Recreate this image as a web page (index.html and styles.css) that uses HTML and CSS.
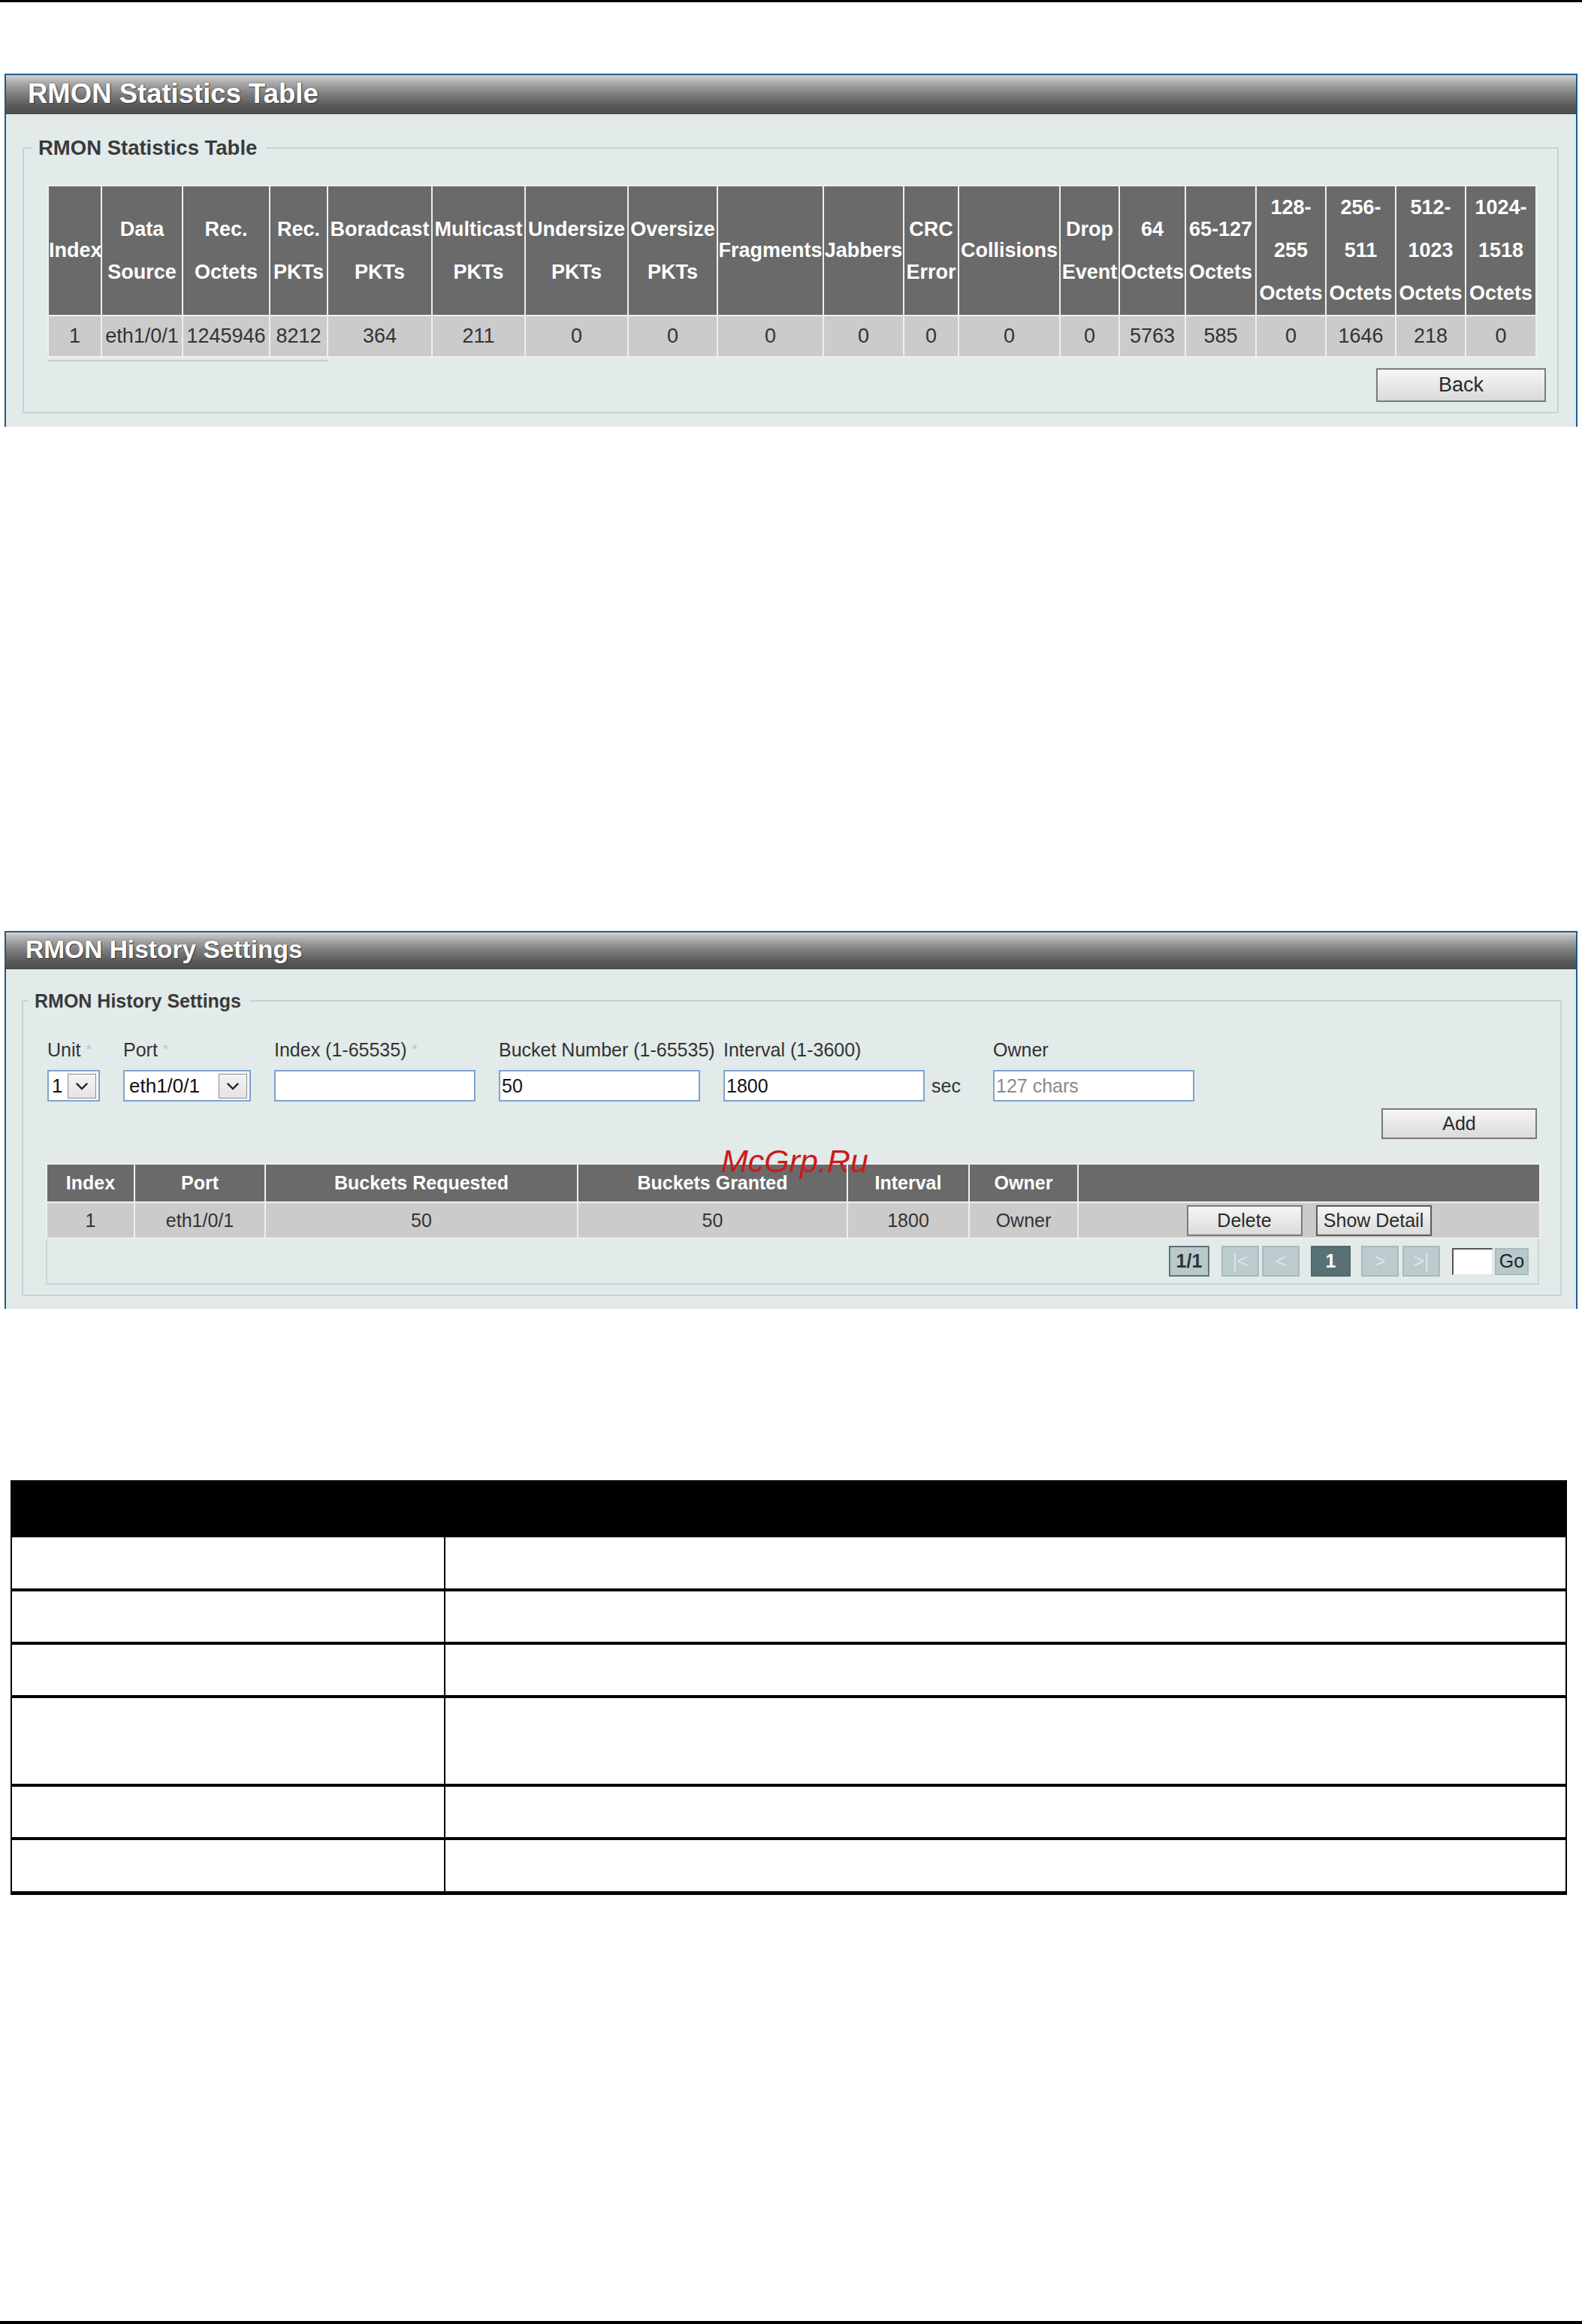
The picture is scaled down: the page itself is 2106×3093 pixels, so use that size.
FILE: index.html
```html
<!DOCTYPE html>
<html>
<head>
<meta charset="utf-8">
<title>RMON</title>
<link rel="stylesheet" href="styles.css">
</head>
<body>
<div class="page">
  <div class="topline"></div>

  <section class="panel panel-stats">
    <div class="panel-head panel-head-1">RMON Statistics Table</div>
    <div class="panel-body pb-1">
      <fieldset class="fs fs-1">
        <legend class="lg lg-1">RMON Statistics Table</legend>
        <div class="fs-body fsb-1">
          <table class="grid stats">
            <colgroup>
              <col style="width:71px"><col style="width:108px"><col style="width:116px"><col style="width:77px">
              <col style="width:139px"><col style="width:124px"><col style="width:137px"><col style="width:119px">
              <col style="width:141px"><col style="width:107px"><col style="width:73px"><col style="width:135px">
              <col style="width:79px"><col style="width:88px"><col style="width:94px"><col style="width:93px">
              <col style="width:93px"><col style="width:93px"><col style="width:94px">
            </colgroup>
            <thead>
              <tr>
                <th>Index</th><th>Data<br>Source</th><th>Rec.<br>Octets</th><th>Rec.<br>PKTs</th>
                <th>Boradcast<br>PKTs</th><th>Multicast<br>PKTs</th><th>Undersize<br>PKTs</th><th>Oversize<br>PKTs</th>
                <th>Fragments</th><th>Jabbers</th><th>CRC<br>Error</th><th>Collisions</th>
                <th>Drop<br>Event</th><th>64<br>Octets</th><th>65-127<br>Octets</th><th>128-<br>255<br>Octets</th>
                <th>256-<br>511<br>Octets</th><th>512-<br>1023<br>Octets</th><th>1024-<br>1518<br>Octets</th>
              </tr>
            </thead>
            <tbody>
              <tr>
                <td>1</td><td>eth1/0/1</td><td>1245946</td><td>8212</td><td>364</td><td>211</td><td>0</td><td>0</td>
                <td>0</td><td>0</td><td>0</td><td>0</td><td>0</td><td>5763</td><td>585</td><td>0</td><td>1646</td><td>218</td><td>0</td>
              </tr>
            </tbody>
          </table>
          <div class="under-line"></div>
          <div class="btn-row">
            <button class="btn btn-back">Back</button>
          </div>
        </div>
      </fieldset>
    </div>
  </section>

  <section class="panel panel-hist">
    <div class="panel-head panel-head-2">RMON History Settings</div>
    <div class="panel-body pb-2">
      <fieldset class="fs fs-2">
        <legend class="lg lg-2">RMON History Settings</legend>
        <div class="fs-body fsb-2">
          <div class="form-row">
            <div class="field f-unit">
              <div class="lbl">Unit <span class="req">*</span></div>
              <div class="select sel-unit"><span class="sel-val">1</span><span class="sel-arrow"><svg viewBox="0 0 20 12" width="18" height="11"><path d="M2 2 L10 10 L18 2" fill="none" stroke="#222" stroke-width="2.6"/></svg></span></div>
            </div>
            <div class="field f-port">
              <div class="lbl">Port <span class="req">*</span></div>
              <div class="select sel-port"><span class="sel-val">eth1/0/1</span><span class="sel-arrow"><svg viewBox="0 0 20 12" width="18" height="11"><path d="M2 2 L10 10 L18 2" fill="none" stroke="#222" stroke-width="2.6"/></svg></span></div>
            </div>
            <div class="field f-txt">
              <div class="lbl">Index (1-65535) <span class="req">*</span></div>
              <input class="txt" type="text" value="">
            </div>
            <div class="field f-txt">
              <div class="lbl">Bucket Number (1-65535)</div>
              <input class="txt" type="text" value="50">
            </div>
            <div class="field f-int">
              <div class="lbl">Interval (1-3600)</div>
              <div class="ctl-line"><input class="txt" type="text" value="1800"><span class="unit">sec</span></div>
            </div>
            <div class="field f-txt">
              <div class="lbl">Owner</div>
              <input class="txt" type="text" placeholder="127 chars">
            </div>
          </div>
          <div class="btn-row">
            <button class="btn btn-add">Add</button>
          </div>
          <table class="grid hist">
            <colgroup>
              <col style="width:117px"><col style="width:174px"><col style="width:416px"><col style="width:359px">
              <col style="width:162px"><col style="width:145px"><col style="width:615px">
            </colgroup>
            <thead>
              <tr><th>Index</th><th>Port</th><th>Buckets Requested</th><th>Buckets Granted</th><th>Interval</th><th>Owner</th><th></th></tr>
            </thead>
            <tbody>
              <tr>
                <td>1</td><td>eth1/0/1</td><td>50</td><td>50</td><td>1800</td><td>Owner</td>
                <td><div class="acts"><button class="btn btn-sm">Delete</button><button class="btn btn-sm btn-dark">Show Detail</button></div></td>
              </tr>
            </tbody>
          </table>
          <div class="pager">
            <span class="pg pg-count">1/1</span>
            <span class="pg pg-dis pg-first">|&lt;</span>
            <span class="pg pg-dis pg-prev">&lt;</span>
            <span class="pg pg-cur">1</span>
            <span class="pg pg-dis pg-next">&gt;</span>
            <span class="pg pg-dis pg-last">&gt;|</span>
            <span class="pg-input"></span>
            <span class="pg pg-go">Go</span>
          </div>
        </div>
      </fieldset>
    </div>
  </section>

  <table class="doc">
    <colgroup><col style="width:577px"><col></colgroup>
    <thead><tr class="dh"><th></th><th></th></tr></thead>
    <tbody>
      <tr class="r72"><td></td><td></td></tr>
      <tr class="r72"><td></td><td></td></tr>
      <tr class="r72"><td></td><td></td></tr>
      <tr class="r119"><td></td><td></td></tr>
      <tr class="r72"><td></td><td></td></tr>
      <tr class="r73 last"><td></td><td></td></tr>
    </tbody>
  </table>

  <div class="watermark">McGrp.Ru</div>
  <div class="bottomline"></div>
</div>
</body>
</html>
```

FILE: styles.css
```css
* { box-sizing: border-box; }
html, body { margin: 0; padding: 0; background: #fff; }
body { font-family: "Liberation Sans", Arial, sans-serif; color: #333; }

.page {
  position: relative;
  min-height: 3093px;
  display: flex;
  flex-direction: column;
}

.topline { height: 3px; background: #000; width: 100%; flex: none; }
.bottomline { margin-top: auto; height: 4px; background: #000; width: 100%; flex: none; }

.panel {
  margin-left: 6px;
  width: 2094px;
  border: 2px solid #1f5c8e;
  border-bottom: none;
  background: #e2eaea;
  flex: none;
}
.panel-stats { margin-top: 95px; }
.panel-hist { margin-top: 671px; }

.panel-head {
  color: #fff;
  font-weight: bold;
  background: linear-gradient(#d2d2d2 0%, #a6a6a6 22%, #7c7c7c 50%, #5a5a5a 78%, #4c4c4c 100%);
  text-shadow: 1px 1px 1px #3a3a3a, 0 0 2px #555;
  white-space: nowrap;
}
.panel-head-1 { height: 52px; font-size: 36.5px; line-height: 49px; padding-left: 29px; }
.panel-head-2 { height: 49px; font-size: 33.5px; line-height: 46px; padding-left: 26px; }

.pb-1 { padding-top: 29px; }
.pb-2 { padding-top: 27px; }

.fs {
  border: 2px solid #c7d3d3;
  padding: 0;
  min-width: 0;
}
.fs-1 { margin: 0 23px 18px 22px; }
.fs-2 { margin: 0 19px 17px 21px; }

.lg { font-weight: bold; color: #3a3a3a; white-space: nowrap; }
.lg-1 { font-size: 27.5px; line-height: 32px; margin-left: 10px; padding: 0 12px 0 9px; }
.lg-2 { font-size: 25px; line-height: 30px; margin-left: 6px; padding: 0 12px 0 9px; }

.fsb-1 { padding: 33px 15px 13px 31px; }
.fsb-2 { padding: 35px 28px 13px 30px; }

/* data tables */
.grid {
  border-collapse: collapse;
  table-layout: fixed;
}
.grid th, .grid td {
  border: 2px solid #eef0f0;
  padding: 0;
  text-align: center;
  vertical-align: middle;
  white-space: nowrap;
  overflow: visible;
}
.grid th { background: #6a6a6a; color: #fff; font-weight: bold; }
.grid td { background: #cbcbcb; color: #333; }

.stats { width: 1978px; }
.stats th { font-size: 27px; line-height: 57px; height: 172px; }
.stats td { font-size: 27px; height: 55px; }

.under-line { width: 373px; height: 2px; background: #c3cbcb; margin-top: 3px; }

.btn-row { display: flex; justify-content: flex-end; }

.btn {
  font-family: "Liberation Sans", Arial, sans-serif;
  color: #2a2a2a;
  background: linear-gradient(#f6f6f6, #dadada);
  border: 2px solid #7a7a7a;
  padding: 0;
  cursor: pointer;
}
.btn-back { width: 226px; height: 45px; font-size: 27px; margin-top: 9px; margin-right: 0; }
.btn-add { width: 207px; height: 41px; font-size: 25px; margin-top: 9px; margin-right: 3px; }

/* form */
.form-row { display: flex; gap: 31px; margin-left: 2px; }
.field { display: flex; flex-direction: column; flex: none; }
.f-unit { width: 70px; }
.f-port { width: 170px; }
.f-txt { width: 268px; }
.f-int { width: 328px; }
.lbl { font-size: 25px; line-height: 30px; height: 30px; color: #333; white-space: nowrap; margin-bottom: 12px; }
.req { color: #b8c0c0; font-size: 18px; vertical-align: top; }

.select {
  height: 42px;
  background: #fff;
  border: 2px solid #7fa3d0;
  display: flex;
  align-items: center;
  justify-content: space-between;
  padding: 0 3px 0 4px;
}
.sel-unit { width: 70px; }
.sel-port { width: 170px; padding-left: 6px; }
.sel-val { font-size: 26px; color: #111; }
.sel-arrow {
  width: 38px; height: 33px;
  background: linear-gradient(#f4f4f4, #e4e4e4);
  border: 1px solid #8c8c8c;
  display: flex; align-items: center; justify-content: center;
}

.txt {
  width: 268px;
  height: 42px;
  border: 2px solid #7fa3d0;
  background: #fff;
  font-family: "Liberation Sans", Arial, sans-serif;
  font-size: 25px;
  color: #111;
  padding: 0 2px;
  outline: none;
  flex: none;
}
.txt::placeholder { color: #8a8a8a; }
.ctl-line { display: flex; align-items: center; }
.unit { font-size: 25px; color: #333; margin-left: 9px; }

.hist { width: 1988px; margin-top: 32px; }
.hist th { font-size: 25px; height: 51px; }
.hist td { font-size: 25px; height: 48px; }
.acts { display: flex; justify-content: center; gap: 18px; }
.btn-sm { width: 154px; height: 41px; font-size: 25px; }
.btn-dark { border-color: #5c5c5c; }

.pager {
  width: 1988px;
  height: 61px;
  border: 2px solid #ccd5d5;
  border-top: none;
  display: flex;
  justify-content: flex-end;
  align-items: center;
  padding-right: 12px;
}
.pg {
  height: 41px;
  display: flex; align-items: center; justify-content: center;
  font-size: 25px;
}
.pg-count { width: 54px; background: #b9c9cb; border: 2px solid #5b7579; font-weight: bold; color: #333; margin-right: 16px; }
.pg-dis { width: 50px; background: #bccbcd; border: 2px solid #a8bbbe; color: #dde6e7; }
.pg-first { margin-right: 4px; }
.pg-prev { margin-right: 15px; }
.pg-cur { width: 53px; background: #587174; border: 2px solid #4f686b; color: #fff; font-weight: bold; margin-right: 14px; }
.pg-next { margin-right: 5px; }
.pg-last { margin-right: 16px; }
.pg-input {
  width: 54px; height: 36px; background: #fff;
  border-top: 2px solid #555; border-left: 2px solid #555;
  border-right: 1px solid #e8e8e8; border-bottom: 1px solid #e8e8e8;
  margin-right: 3px;
}
.pg-go { width: 45px; height: 36px; background: #b9c9cb; border: 2px solid #a8bbbe; color: #222; align-items: flex-end; padding-bottom: 2px; }

/* document table */
.doc {
  margin-top: 228px;
  margin-left: 14px;
  width: 2072px;
  border-collapse: collapse;
  table-layout: fixed;
  flex: none;
}
.doc th { background: #000; height: 74px; border: 2px solid #000; padding: 0; }
.doc td { border-left: 2px solid #000; border-right: 2px solid #000; border-bottom: 4px solid #000; padding: 0; }
.doc tr.r72 td { height: 71px; }
.doc tr.r73 td { height: 72px; }
.doc tr.r119 td { height: 118px; }
.doc tr.last td { border-bottom: 5px solid #000; }

.watermark {
  position: absolute;
  left: 960px;
  top: 1524px;
  font-size: 43px;
  line-height: 43px;
  font-style: italic;
  color: #cc1a1a;
  font-family: "Liberation Sans", Arial, sans-serif;
  white-space: nowrap;
}
```
